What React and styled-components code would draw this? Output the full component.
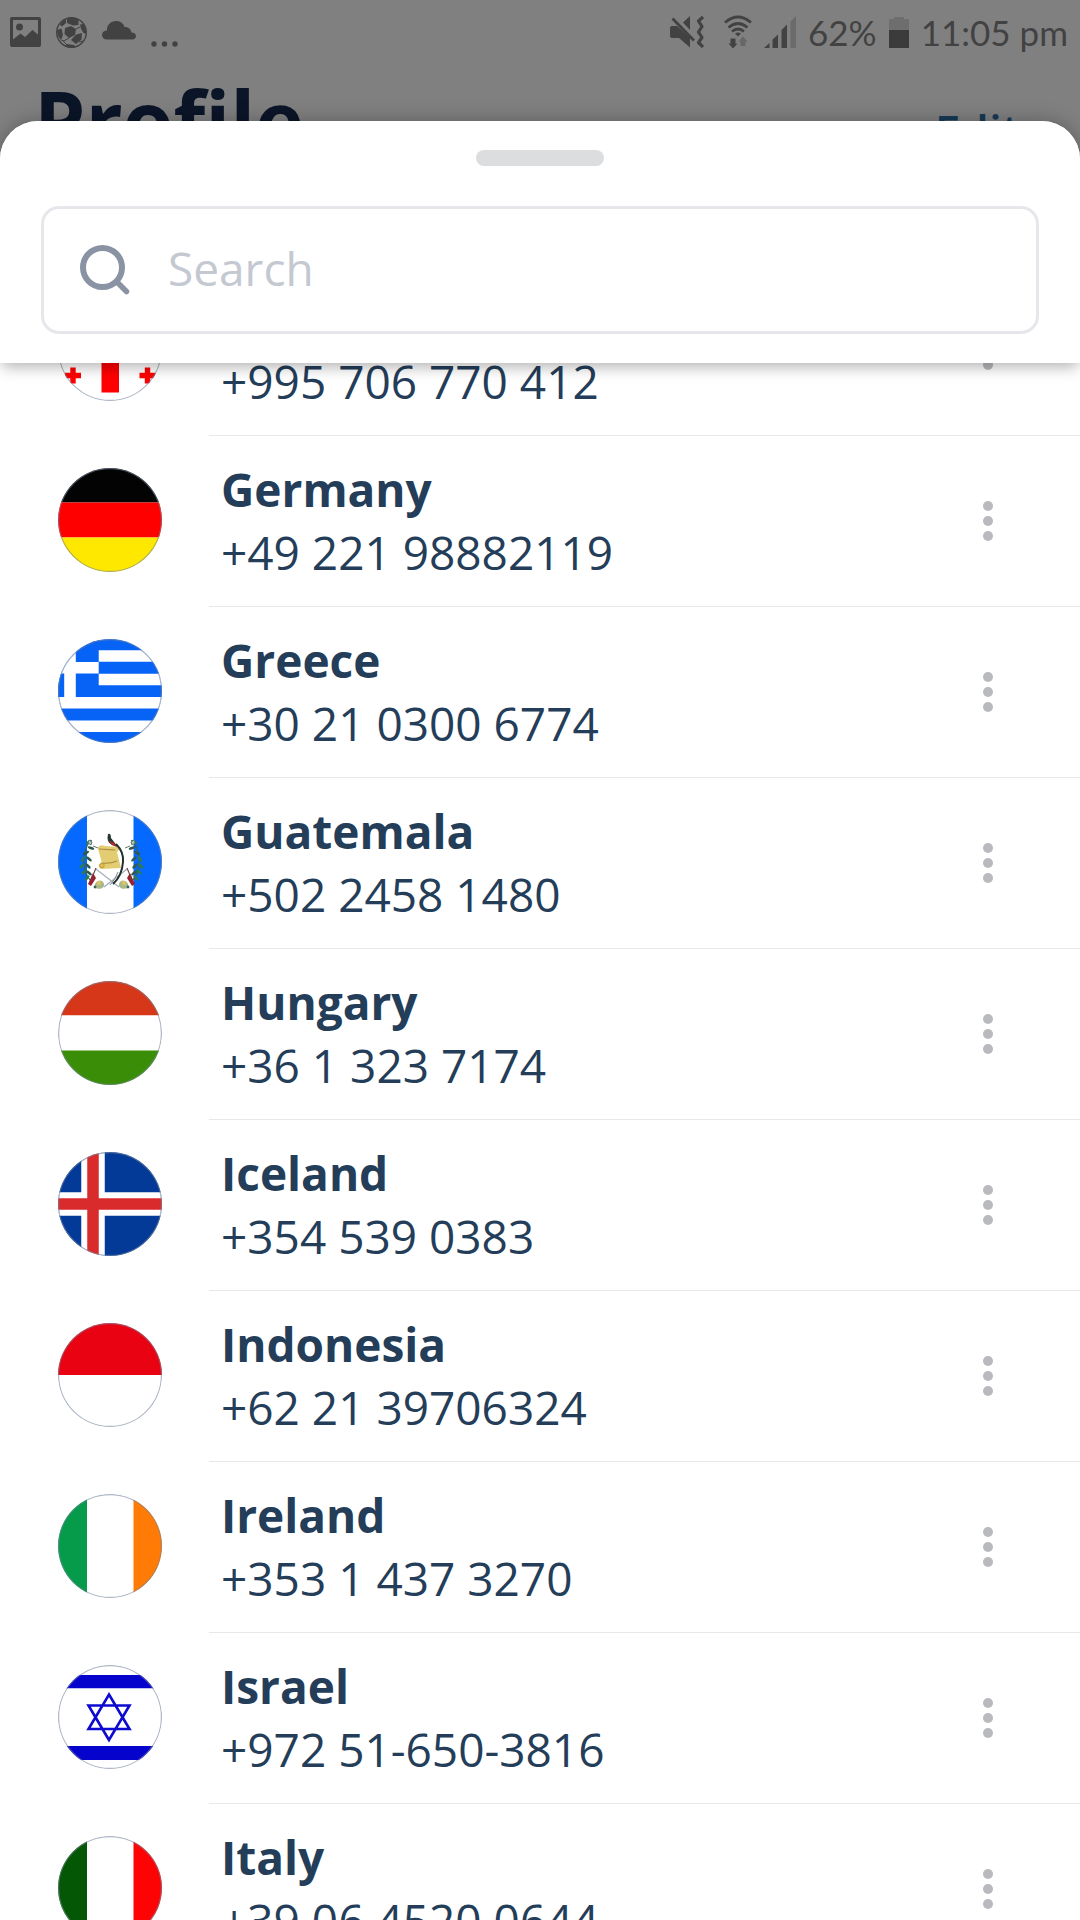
import React, { useLayoutEffect, useRef } from "react";
import styled, { createGlobalStyle } from "styled-components";

const GlobalStyle = createGlobalStyle`
  *, *::before, *::after { box-sizing: border-box; }
  body { margin: 0; background: #808080; }
  body, button, input { font-family: "Open Sans", "Noto Sans", sans-serif; }
`;

const Screen = styled.div`
  display: flex;
  flex-direction: column;
  height: 100vh;
  overflow: hidden;
  background: #808080;
`;

const Backdrop = styled.div`
  height: 121px;
  flex: none;
`;

const StatusBar = styled.div`
  display: flex;
  justify-content: space-between;
  align-items: center;
  height: 64px;
  padding: 0 12px 0 10px;
  color: #424242;
`;

const StatusGroup = styled.div`
  display: flex;
  align-items: center;
  gap: ${(p) => p.$gap}px;
`;

const StatusText = styled.span`
  font-family: Lato, "Open Sans", sans-serif;
  font-size: 35px;
  line-height: 48px;
  white-space: pre;
`;

const TitleBar = styled.header`
  display: flex;
  justify-content: space-between;
  align-items: center;
  padding: 0 60px 0 34px;
`;

const Title = styled.h1`
  margin: 0;
  font-size: 82px;
  font-weight: 700;
  line-height: 110px;
  color: #0b1528;
`;

const EditButton = styled.button`
  padding: 22px 0 0;
  border: 0;
  background: none;
  font-size: 46px;
  font-weight: 600;
  line-height: 63px;
  color: #163a57;
`;

const Sheet = styled.main`
  position: relative;
  display: flex;
  flex-direction: column;
  flex: 1;
  min-height: 0;
  border-radius: 38px 38px 0 0;
  background: #fff;
  box-shadow: 0 0 20px rgba(0, 0, 0, 0.28);
  overflow: hidden;
`;

const SheetHeader = styled.div`
  position: relative;
  z-index: 1;
  display: flex;
  flex-direction: column;
  align-items: center;
  gap: 40px;
  padding: 29px 41px;
  background: #fff;
  box-shadow: 0 6px 14px -2px rgba(0, 0, 0, 0.3);
`;

const Handle = styled.div`
  width: 128px;
  height: 16px;
  border-radius: 8px;
  background: #dcdddf;
`;

const SearchBox = styled.label`
  display: flex;
  align-items: center;
  gap: 38px;
  width: 100%;
  height: 128px;
  padding: 0 36px;
  border: 3px solid #e6e7eb;
  border-radius: 18px;
`;

const SearchInput = styled.input`
  flex: 1;
  min-width: 0;
  padding: 0 0 4px;
  border: 0;
  outline: 0;
  background: none;
  font-size: 46px;
  line-height: 63px;
  color: #243d59;
  &::placeholder { color: #c4c8d1; opacity: 1; }
`;

const List = styled.ul`
  flex: 1;
  min-height: 0;
  margin: 0;
  padding: 0;
  list-style: none;
  overflow-y: auto;
  scrollbar-width: none;
`;

const Row = styled.li`
  display: flex;
  align-items: flex-start;
  gap: 47px;
  height: 171px;
  padding-left: 58px;
`;

const FlagFrame = styled.div`
  width: 104px;
  height: 104px;
  margin-top: 32px;
  border-radius: 50%;
  overflow: hidden;
  flex: none;
  svg { display: block; }
`;

const RowBody = styled.div`
  display: flex;
  flex: 1;
  justify-content: space-between;
  align-items: center;
  height: 100%;
  padding: 0 77px 0 12px;
  border-bottom: 1px solid #e7e8ea;
`;

const Country = styled.div`
  font-size: 46px;
  font-weight: 700;
  line-height: 63px;
  color: #243d59;
`;

const Phone = styled.div`
  font-size: 46px;
  line-height: 63px;
  color: #243d59;
`;

const MoreButton = styled.button`
  display: flex;
  flex-direction: column;
  gap: 5px;
  padding: 10px;
  border: 0;
  background: none;
`;

const Dot = styled.span`
  width: 10px;
  height: 10px;
  border-radius: 50%;
  background: #b9babd;
`;

const Bands = ({ colors, vertical, at = [0, 34.5, 69.5] }) =>
  colors.map((c, i) => {
    const end = i + 1 < at.length ? at[i + 1] : 104;
    return vertical ? (
      <rect key={i} x={at[i]} y="0" width={end - at[i]} height="104" fill={c} />
    ) : (
      <rect key={i} x="0" y={at[i]} width="104" height={end - at[i]} fill={c} />
    );
  });

const pales = [0, 29, 75.5];

const sprig = [
  [28, 43, -30], [25, 49, -60], [31, 49, 40], [24, 56, -50], [30, 56, 45],
  [26, 62, -40], [31, 63, 40], [29, 68, -50], [33, 38, 20], [31, 32, -30],
];

const Guatemala = () => (
  <>
    <Bands vertical at={pales} colors={["#0569ff", "#fff", "#0569ff"]} />
    {[false, true].map((flip) => (
      <g key={String(flip)} transform={flip ? "translate(107 0) scale(-1 1)" : undefined}>
        <path d="M32 31C24 42 24 60 32 70" fill="none" stroke="#35634a" strokeWidth="1.2" />
        {sprig.map(([x, y, r], i) => (
          <ellipse key={i} cx={x} cy={y} rx="3.4" ry="1.4" fill={i % 2 ? "#2d7a5a" : "#31584a"} transform={`rotate(${r} ${x} ${y})`} />
        ))}
        <path d="M31 30l3 2-1 3-3-2zM35 36l5 2" stroke="#64786a" fill="#b9cbbd" strokeWidth="1" />
        <path d="M38 59l23 18" stroke="#a3b0be" strokeWidth="1.3" />
        <path d="M35 63l-5 11 3 2 5-8z" fill="#9b1f2d" />
        <path d="M37 74c3-5 8-4 9 0s-4 6-9 4z" fill="#a9b98c" />
        <circle cx="41" cy="73" r="2" fill="#e3c65a" />
        <circle cx="37" cy="77" r="1.4" fill="#3b6651" />
        <path d="M33 70l5-12" stroke="#6e3d3b" strokeWidth="1.1" />
      </g>
    ))}
    <path d="M40 37q3-3 7-1l14 1q1 3-2 5l4 16-20 1q-3-1-2-5l3-1-4-14z" fill="#e3cd73" />
    <path d="M41 39l16 1M43 53q9 1 16-2" fill="none" stroke="#a8883c" strokeWidth="1.2" />
    <circle cx="44" cy="55.5" r="2.2" fill="#dfc050" stroke="#b49336" strokeWidth="0.8" />
    <path d="M50 24q3-1 3 4l7 9-6-2q-6-3-4-11z" fill="#26382f" />
    <path d="M51 31q6 1 8 6l-5-2z" fill="#b3262e" />
    <path d="M58 34q8 8 7 18-1 14-10 22" fill="none" stroke="#22332e" strokeWidth="2" />
    <path d="M60 62q-3 8-8 13" fill="none" stroke="#7c8a86" strokeWidth="1" />
  </>
);

const flags = {
  georgia: (
    <>
      <rect width="104" height="104" fill="#fff" />
      <path d="M43.5 8H61V43H104V61H61V95.5H43.5V61H0V43H43.5z" fill="#f00" />
      {[[15, 26], [89.5, 26], [15, 78.5], [89.5, 78.5]].map(([x, y]) => (
        <path key={`${x}-${y}`} d={`M${x - 8} ${y}h16M${x} ${y - 8}v16`} stroke="#f00" strokeWidth="5.4" />
      ))}
    </>
  ),
  germany: <Bands colors={["#030303", "#f00", "#ffe800"]} />,
  greece: (
    <>
      <rect width="104" height="104" fill="#0663f5" />
      <path d="M0 17H104M0 40.5H104M0 63.8H104M0 87.2H104" stroke="#fff" strokeWidth="11.6" />
      <rect width="40.7" height="58" fill="#0663f5" />
      <path d="M12 0V58M0 28.8H40.7" stroke="#fff" strokeWidth="11.6" />
    </>
  ),
  guatemala: <Guatemala />,
  hungary: <Bands colors={["#d53718", "#fff", "#3a8e07"]} />,
  iceland: (
    <>
      <rect width="104" height="104" fill="#033997" />
      <path d="M35 0V104M0 52H104" stroke="#fff" strokeWidth="23.5" />
      <path d="M35 0V104M0 52H104" stroke="#d92a2c" strokeWidth="11.5" />
    </>
  ),
  indonesia: <Bands at={[0, 52]} colors={["#e80212", "#fff"]} />,
  ireland: <Bands vertical at={pales} colors={["#059b4b", "#fff", "#ff7b05"]} />,
  israel: (
    <>
      <Bands at={[0, 10, 23.5, 81, 95]} colors={["#fff", "#0604cc", "#fff", "#0604cc", "#fff"]} />
      <path d="M51 29.5L71.500 64H30.500zM51 75L30.500 40.500H71.500z" fill="none" stroke="#0c0bcf" strokeWidth="2.600" />
    </>
  ),
  italy: <Bands vertical at={pales} colors={["#045704", "#fff", "#fd0303"]} />,
};

const Flag = ({ code }) => (
  <FlagFrame>
    <svg width="104" height="104" viewBox="0 0 104 104" aria-hidden="true">
      {flags[code]}
      <circle cx="52" cy="52" r="51.5" fill="none" stroke="#77869c" strokeOpacity="0.6" strokeWidth="1.4" />
    </svg>
  </FlagFrame>
);

const contacts = [
  ["georgia", "Georgia", "+995 706 770 412"],
  ["germany", "Germany", "+49 221 98882119"],
  ["greece", "Greece", "+30 21 0300 6774"],
  ["guatemala", "Guatemala", "+502 2458 1480"],
  ["hungary", "Hungary", "+36 1 323 7174"],
  ["iceland", "Iceland", "+354 539 0383"],
  ["indonesia", "Indonesia", "+62 21 39706324"],
  ["ireland", "Ireland", "+353 1 437 3270"],
  ["israel", "Israel", "+972 51-650-3816"],
  ["italy", "Italy", "+39 06 4520 0644"],
];

const PictureIcon = () => (
  <svg width="31" height="30" viewBox="0 0 31 30" aria-hidden="true">
    <path fillRule="evenodd" fill="currentColor" d="M2 0H29Q31 0 31 2V28Q31 30 29 30H2Q0 30 0 28V2Q0 0 2 0zM3 3V22.500L10.500 16.500L15 20L22.500 13L28 17.500V3z" />
    <circle cx="9.500" cy="10" r="3.500" fill="currentColor" />
  </svg>
);

const BallIcon = () => (
  <svg width="31" height="31" viewBox="0 0 31 31" aria-hidden="true">
    <circle cx="15.500" cy="15.500" r="14.800" fill="none" stroke="currentColor" strokeWidth="1.400" />
    <path fill="currentColor" d="M9 11L15 9L20 12L19 18L13 21L8.500 17zM11 2Q17-1 22.500 2.500V8L17 8.500L11 6zM1 13L5.500 11.500L7 18L5 23Q1 19 1 13zM20 17.500L26 16L25.500 22.500L20 27L15 23zM24 7.500L27.500 7Q30.500 12 30.500 17L27.500 16L25 12zM4 8Q6 4 10 2L10 6L6 9.500zM11 27L18 28L20 30Q14 32 9.500 29.500z" />
    <path d="M7 24L11 28M5 23L8 24L13 21M20 12L24 10M23 25L27 24" fill="none" stroke="currentColor" strokeWidth="1" />
  </svg>
);

const CloudIcon = () => (
  <svg width="34" height="34" viewBox="0 0 34 34" aria-hidden="true">
    <path fill="currentColor" d="M5 24.500C2 24.500 0 22.500 0 20C0 17.500 2 15.500 5 15.500C4.500 10 9 6 14 6C18.500 6 21.500 8.500 22.500 12C26 11.500 29 14 29.500 17.500C32 17.500 34 19 34 21C34 23 32.500 24.500 30 24.500z" />
  </svg>
);

const MoreIcon = () => (
  <svg width="27" height="30" viewBox="0 0 27 30" aria-hidden="true">
    <g fill="currentColor"><circle cx="3" cy="27" r="2.700" /><circle cx="13.500" cy="27" r="2.700" /><circle cx="24" cy="27" r="2.700" /></g>
  </svg>
);

const MuteIcon = () => (
  <svg width="34" height="32" viewBox="0 0 34 32" aria-hidden="true">
    <path fill="currentColor" d="M0 12Q0 10 2 10H7L20 21.500V31.500L9 22H2Q0 22 0 20zM13 6.500L20 0V14z" />
    <path d="M2.500 2.500L24 24.500" stroke="currentColor" strokeWidth="2.800" />
    <path d="M33 1L28.500 5L32 10.500L28.500 16L32 21.500L28.500 26.500L33 31" fill="none" stroke="currentColor" strokeWidth="3.200" strokeLinejoin="round" />
  </svg>
);

const WifiIcon = () => (
  <svg width="28" height="34" viewBox="0 0 28 34" aria-hidden="true">
    <g fill="none" stroke="currentColor" strokeWidth="2.700">
      <path d="M1 7.500Q14 -3.500 27 7.500" /><path d="M4.500 12.500Q14 4.500 23.500 12.500" /><path d="M8 16.500Q14 11.500 20 16.500" />
    </g>
    <path fill="currentColor" d="M11 18.500Q14 16.500 17 18.500L14 21.500zM6.500 23.500H11.500V28.500H13.500L9 33.500L4.500 28.500H6.500z" />
    <path fill="#676767" d="M16.500 31H21.500V26.500H23.500L19 21.500L14.500 26.500H16.500z" />
  </svg>
);

const SignalIcon = () => (
  <svg width="32" height="32" viewBox="0 0 32 32" aria-hidden="true">
    <path fill="currentColor" d="M0 32L5.500 27V32zM8.500 23.500L14 18.500V32H8.500zM17.500 14L23 8.500V32H17.500z" />
    <path fill="#6b6b6b" d="M26.500 5.500L32 0V32H26.500z" />
  </svg>
);

const BatteryIcon = () => (
  <svg width="20" height="31" viewBox="0 0 20 31" aria-hidden="true">
    <path fill="#6e6e6e" d="M0 2H5V0H15V2H20V31H0z" /><path fill="#3b3b3b" d="M0 13H20V31H0z" />
  </svg>
);

const SearchIcon = () => (
  <svg width="50" height="50" viewBox="0 0 50 50" fill="none" stroke="#8993a4" strokeWidth="6" strokeLinecap="round" aria-hidden="true">
    <circle cx="22.500" cy="22.500" r="19.500" /><path d="M37 37L46.500 46.500" strokeWidth="5.500" />
  </svg>
);

export default function App() {
  const list = useRef(null);

  // Opens the list part-way through, with Germany as the first full row.
  useLayoutEffect(() => {
    list.current.scrollTop = 98;
  }, []);

  return (
    <>
      <GlobalStyle />
      <Screen>
        <Backdrop>
          <StatusBar>
            <StatusGroup $gap={15}>
              <PictureIcon />
              <BallIcon />
              <CloudIcon />
              <MoreIcon />
            </StatusGroup>
            <StatusGroup $gap={12}>
              <StatusGroup $gap={20}>
                <MuteIcon />
                <WifiIcon />
              </StatusGroup>
              <SignalIcon />
              <StatusText>62%</StatusText>
              <BatteryIcon />
              <StatusText>11:05 pm</StatusText>
            </StatusGroup>
          </StatusBar>
          <TitleBar>
            <Title>Profile</Title>
            <EditButton type="button">Edit</EditButton>
          </TitleBar>
        </Backdrop>
        <Sheet>
          <SheetHeader>
            <Handle />
            <SearchBox>
              <SearchIcon />
              <SearchInput type="search" placeholder="Search" aria-label="Search" />
            </SearchBox>
          </SheetHeader>
          <List ref={list}>
            {contacts.map(([code, name, phone]) => (
              <Row key={code}>
                <Flag code={code} />
                <RowBody>
                  <div>
                    <Country>{name}</Country>
                    <Phone>{phone}</Phone>
                  </div>
                  <MoreButton type="button" aria-label={`More options for ${name}`}>
                    <Dot />
                    <Dot />
                    <Dot />
                  </MoreButton>
                </RowBody>
              </Row>
            ))}
          </List>
        </Sheet>
      </Screen>
    </>
  );
}
